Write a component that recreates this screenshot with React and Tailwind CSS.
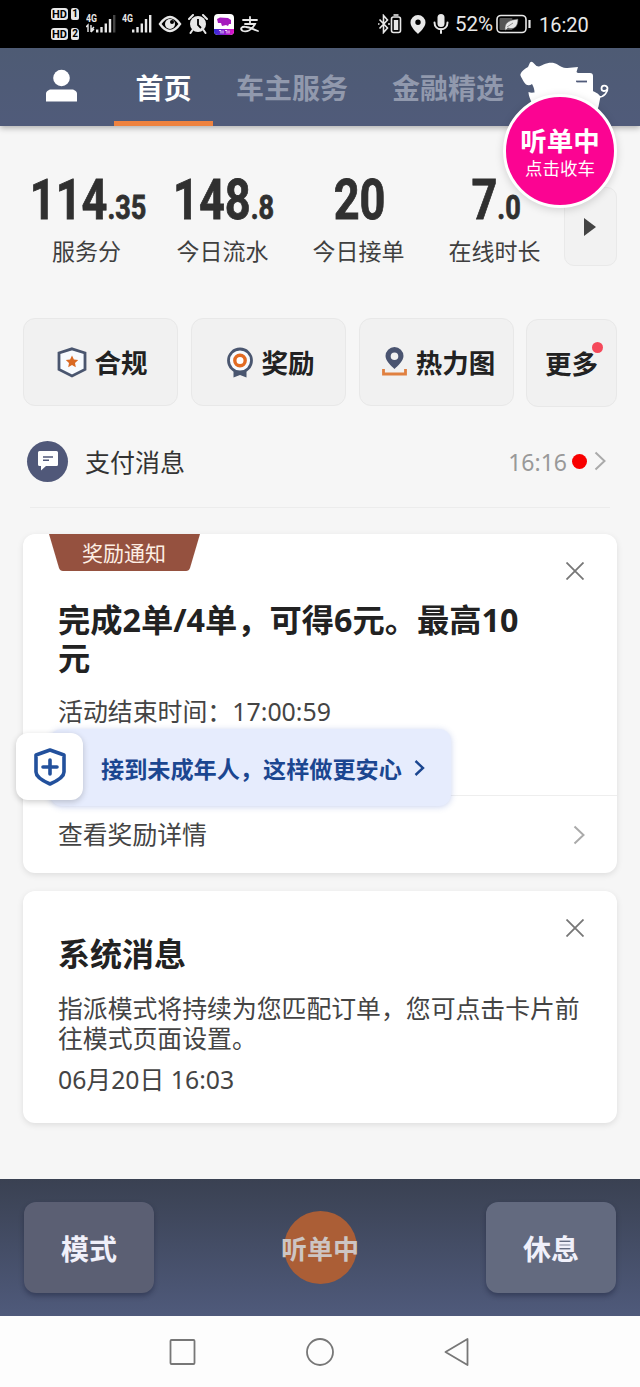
import React from 'react';

const stats = [
  { value: '114', fraction: '.35', label: '服务分' },
  { value: '148', fraction: '.8', label: '今日流水' },
  { value: '20', fraction: '', label: '今日接单' },
  { value: '7', fraction: '.0', label: '在线时长' },
];

const Signal = ({ weak }) => (
  <svg width="30" height="24" viewBox="0 0 30 24" fill="#e8e8e8">
    <text x="0" y="9.500" fontSize="11" fontWeight="700" fontFamily="Roboto" textLength="11" lengthAdjust="spacingAndGlyphs">4G</text>
    {weak && <path d="M0 15l2-2v7M5 13v7M5 18l3-3M5 20l3-3" fill="none" stroke="#e8e8e8" strokeWidth="1.4" />}
    <rect x="10" y="17.500" width="2.4" height="3" />
    <rect x="14.3" y="15" width="2.4" height="5.500" />
    <rect x="18.6" y="11.500" width="2.4" height="9" />
    <rect x="22.8" y="7" width="2.4" height="13.500" />
    <rect x="27" y="3" width="2.4" height="17.500" fill={weak ? '#444' : '#e8e8e8'} />
  </svg>
);

const SimRow = ({ n }) => (
  <div className="flex items-center gap-[3px]">
    <span className="flex h-[12px] w-[17px] items-center justify-center rounded-[3px] bg-[#e8e8e8] text-[11px] leading-none font-bold text-black">HD</span>
    <span className="flex h-[12px] w-[8px] items-center justify-center rounded-[2px] rounded-tr-[4px] bg-[#e8e8e8] text-[10px] leading-none font-bold text-black">{n}</span>
  </div>
);

const StatusBar = () => (
  <div className="flex h-[48px] items-center bg-black pl-[51px] font-[Roboto] text-[#e8e8e8]">
    <div className="flex w-[35px] flex-col gap-[8px]">
      <SimRow n="1" />
      <SimRow n="2" />
    </div>
    <div className="flex w-[36px]"><Signal weak /></div>
    <div className="flex w-[36px]"><Signal /></div>
    <svg className="mr-[6px]" width="24" height="18" viewBox="0 0 24 18">
      <path d="M2 9Q12-5 22 9Q12 23 2 9Z" fill="none" stroke="#e8e8e8" strokeWidth="2.4" />
      <circle cx="12" cy="9" r="5" fill="#e8e8e8" />
      <circle cx="14" cy="7" r="2" fill="#000" />
    </svg>
    <svg className="mr-[6px]" width="20" height="20" viewBox="0 0 20 20">
      <circle cx="10" cy="10" r="8" fill="#e8e8e8" />
      <path d="M1 5l4-4M19 5l-4-4M4.500 16l-2 3M15.500 16l2 3" stroke="#e8e8e8" strokeWidth="2" strokeLinecap="round" />
      <path d="M10 5v6l3 3" fill="none" stroke="#000" strokeWidth="1.8" />
    </svg>
    <svg className="mr-[6px]" width="20" height="21" viewBox="0 0 20 21">
      <defs>
        <linearGradient id="app" x2="1">
          <stop stopColor="#2d2ad8" />
          <stop offset="1" stopColor="#e313c6" />
        </linearGradient>
        <clipPath id="appClip"><rect width="20" height="21" rx="4" /></clipPath>
      </defs>
      <g clipPath="url(#appClip)">
        <rect width="20" height="21" fill="#fff" />
        <path d="M3 5l3-1.500 8 .5 3 2v4h-2l-1 2-2-1-4 1-1-3-3 0z" fill="#a51bbd" />
        <rect y="15" width="20" height="6" fill="url(#app)" />
        <path d="M5 16.500h2v3M9 16.500v3M11 16.500h2v3M15 16.500v3" stroke="#fff" strokeWidth=".8" fill="none" />
      </g>
    </svg>
    <svg width="20" height="17" viewBox="0 0 20 17" fill="none" stroke="#e8e8e8" strokeWidth="1.8" strokeLinecap="round">
      <path d="M3 4h14M10 1v6M5 8h10C12 14 7 16 3 15c-4-2-1-5 3-4 4 0 8 3 12 4" />
    </svg>

    <svg className="ml-[118px]" width="12" height="20" viewBox="0 0 12 20" fill="none" stroke="#e8e8e8" strokeWidth="1.6">
      <path d="M1.500 5.500l8 8.500-4 4.500V1.500l4 4.500-8 8.500" />
      <path d="M0 10h1.500M10 10h2" />
    </svg>
    <svg className="mr-[8px]" width="12" height="20" viewBox="0 0 12 20">
      <rect x="1.500" y="3" width="9" height="15.500" rx="2" fill="none" stroke="#e8e8e8" strokeWidth="1.6" />
      <rect x="3.800" y="6" width="4.400" height="10" fill="#e8e8e8" />
      <path d="M3.500 1h5" stroke="#e8e8e8" strokeWidth="1.6" />
    </svg>
    <svg width="16" height="19" viewBox="0 0 16 19">
      <path fillRule="evenodd" fill="#e8e8e8" d="M8 0a7.500 7.500 0 0 1 7.500 7.500C15.500 12 10 17 8 19 6 17 .5 12 .5 7.500A7.500 7.500 0 0 1 8 0zm0 4.500a2.700 2.700 0 1 0 0 5.400 2.700 2.700 0 0 0 0-5.400z" />
    </svg>
    <svg className="mr-[6px] ml-[7px]" width="16" height="20" viewBox="0 0 16 20">
      <rect x="4.500" y="0" width="7" height="13" rx="3.500" fill="#e8e8e8" />
      <path d="M1.500 8.500c0 9 13 9 13 0M8 15v4" fill="none" stroke="#e8e8e8" strokeWidth="2" strokeLinecap="round" />
    </svg>
    <span className="w-[41px] pt-px text-[20.5px]">52%</span>
    <svg width="36" height="20" viewBox="0 0 36 20">
      <rect x="1" y="1.500" width="29" height="17" rx="4" fill="none" stroke="#e8e8e8" strokeWidth="1.600" />
      <rect x="3.500" y="4" width="13" height="12" rx="1" fill="#555" />
      <path d="M9 16C8 8 14 6 22 5c0 8-4 11-10 9l-2 2zM11 13l6-4" fill="#e8e8e8" stroke="#555" strokeWidth=".6" />
      <path d="M33.500 6v8" stroke="#e8e8e8" strokeWidth="2.200" />
    </svg>
    <span className="ml-[7px] pt-px text-[20px]">16:20</span>
  </div>
);

const Header = () => (
  <div className="relative flex h-[78px] items-center bg-gradient-to-b from-[#4e5b74] to-[#505b7a] text-[28px] font-bold shadow-[0_2px_6px_rgba(0,0,0,0.3)]">
    <svg className="mb-[3px] ml-[45px]" width="33" height="33" viewBox="0 0 33 33" fill="#fff">
      <circle cx="16.500" cy="9" r="8.300" />
      <path d="M1 32.500v-8c0-2 3-4 5-4h21c2 0 5 2 5 4v8z" />
    </svg>
    <div className="ml-[36px] flex h-full w-[99px] items-center justify-center border-b-[5px] border-[#ee823f] pt-[7px] text-white">首页</div>
    <span className="ml-[23px] pt-[2px] text-[#9199ad]">车主服务</span>
    <span className="ml-[44px] pt-[2px] text-[#9199ad]">金融精选</span>
  </div>
);

// Floating pig badge that overlaps the header and the stats
const PigBadge = () => (
  <div className="absolute top-[56px] left-[500px] z-20 h-[156px] w-[120px]">
    <svg className="absolute top-0 left-0" width="120" height="60" viewBox="500 56 120 60">
      <rect x="570" y="73" width="23" height="30" rx="3" fill="#fff" />
      <path d="M576 81.500h11" stroke="#505b7a" strokeWidth="1.800" />
      <path fill="#fff" d="M520.500 74c1-3 4-5 7.500-7l2-4.500q1.500-1.500 3 0l3.500 3.500c3 1 4 0 7-1.500 5-2 10-2.500 14 0 4 2.500 6 4 10 3.500q5-.5 10.500-1l-1.500 5 2 1.500c-2 2-3.500 3-3 6 1 6 6 8 13 10 4 1 9 3 12 7l-2 10-3 8h-66l3-10c-1-3-4-8-4-12.500 2 1 5 .5 6 .5 0-3-1-6-2.500-8.500-2 1.500-4 1.500-6 .5-2-2-3-4-4-6-1-2-2-3-1.500-4.500z" />
      <path d="M599 97c5 0 9-5 8.500-9-1-3.500-6-3-6 .5 0 3 4 3.500 6 .5" fill="none" stroke="#fff" strokeWidth="1.800" />
    </svg>
    <div className="absolute top-[38px] left-[3px] flex h-[114px] w-[114px] flex-col items-center rounded-full border-[3px] border-white bg-[#fb0492] pt-[31px] text-white shadow-[0_2px_8px_rgba(0,0,0,0.15)]">
      <span className="text-[26.500px] leading-[27px] font-bold">听单中</span>
      <span className="mt-[3px] text-[17.500px] leading-[20px]">点击收车</span>
    </div>
  </div>
);

const Stats = () => (
  <div className="flex pt-[42px] pl-[19px]">
    {stats.map((s) => (
      <div key={s.label} className="flex w-[136px] flex-col items-center">
        <div className="ml-[2px] flex h-[68px] scale-x-[0.82] items-baseline font-[Roboto] text-[55px] leading-[64px] font-bold whitespace-nowrap text-[#303030] [-webkit-text-stroke:0.8px_#303030]">
          {s.value}
          {s.fraction && <span className="text-[33px]">{s.fraction}</span>}
        </div>
        <span className="mr-px text-[23px] leading-[30px] text-[#3f3f3f]">{s.label}</span>
      </div>
    ))}
    <div className="mt-[19px] ml-px flex h-[79px] w-[53px] items-center justify-center rounded-[10px] border border-[#e9e9e9] bg-[#f2f2f2]">
      <svg className="mr-[2px]" width="14" height="20" viewBox="0 0 14 20"><path d="M1 1l12 9L1 19z" fill="#444" /></svg>
    </div>
  </div>
);

const ShieldStar = () => (
  <svg width="30" height="31" viewBox="0 0 30 31">
    <path d="M15 1.800L28 6v16.500L15 29 2 22.500V6z" fill="#f7fbff" stroke="#4a566f" strokeWidth="2.800" />
    <path d="M15 8.500l1.900 3.900 4.300.5-3.200 3 .8 4.300-3.800-2.100-3.800 2.100.8-4.300-3.200-3 4.300-.5z" fill="#d96a24" />
  </svg>
);

const Medal = () => (
  <svg width="28" height="31" viewBox="0 0 28 31">
    <path d="M7.500 21v9.500L14 28l6.500 2.500V21z" fill="#4a566f" />
    <circle cx="14" cy="13.500" r="11.500" fill="#f7fbff" stroke="#4a566f" strokeWidth="2.800" />
    <circle cx="14" cy="13.500" r="5.200" fill="#fff" stroke="#e26b22" strokeWidth="3.400" />
  </svg>
);

const HeatPin = () => (
  <svg width="27" height="30" viewBox="0 0 27 30">
    <path fillRule="evenodd" fill="#4a5470" d="M13.500 0a9 9 0 0 1 9 9c0 5-6 10-9 13-3-3-9-8-9-13a9 9 0 0 1 9-9zm0 5.500a3.800 3.800 0 1 0 0 7.600 3.800 3.800 0 0 0 0-7.600z" />
    <path d="M2.500 22v5h22v-5" fill="none" stroke="#e08040" strokeWidth="2.800" />
  </svg>
);

const Shortcut = ({ icon, label }) => (
  <div className="flex h-[88px] w-[155px] items-center justify-center gap-[8px] rounded-[12px] border border-[#e8e8e8] bg-[#f1f1f1] pl-[3px]">
    {icon}
    <span className="pt-[3px]">{label}</span>
  </div>
);

const Shortcuts = () => (
  <div className="mt-[52px] ml-[23px] flex gap-[13px] text-[26.500px] font-bold text-[#222]">
    <Shortcut icon={<ShieldStar />} label="合规" />
    <Shortcut icon={<Medal />} label="奖励" />
    <Shortcut icon={<HeatPin />} label="热力图" />
    <div className="relative mt-px -mb-px -ml-px flex h-[88px] w-[91px] items-center justify-center rounded-[12px] border border-[#e8e8e8] bg-[#f1f1f1] pt-[3px]">
      更多
      <span className="absolute top-[22px] right-[13px] size-[11px] rounded-full bg-[#f5495b]" />
    </div>
  </div>
);

const Arrow = ({ className }) => (
  <svg className={className} width="12" height="20" viewBox="0 0 12 20" fill="none" stroke="#aaa" strokeWidth="2">
    <path d="M1.500 1.500l9 8.500-9 8.500" />
  </svg>
);

const Close = () => (
  <svg className="absolute top-[28px] right-[33px]" width="18" height="18" viewBox="0 0 18 18" stroke="#777" strokeWidth="1.800">
    <path d="M.5.5l17 17M17.500.5l-17 17" />
  </svg>
);

const MessageRow = () => (
  <div className="mx-[30px] mt-[9px] flex h-[93px] items-center border-b border-[#ececec]">
    <div className="-ml-[3px] flex size-[41px] items-center justify-center rounded-full bg-[#505879]">
      <svg width="20" height="20" viewBox="0 0 20 20">
        <path d="M1.500 0h17a1.500 1.500 0 0 1 1.500 1.500v12a1.500 1.500 0 0 1-1.500 1.500H8l-5 4.500V15H1.500A1.500 1.500 0 0 1 0 13.500v-12A1.500 1.500 0 0 1 1.500 0z" fill="#fff" />
        <path d="M5 6h10M5 9.300h6" stroke="#505879" strokeWidth="1.400" />
      </svg>
    </div>
    <span className="ml-[17px] flex-1 pt-[3px] text-[25px] text-[#333]">支付消息</span>
    <span className="pt-[2px] text-[23px] text-[#999]">16:16</span>
    <span className="ml-[5px] size-[15px] rounded-full bg-[#f80000]" />
    <Arrow className="mr-[4px] ml-[7px]" />
  </div>
);

const RewardCard = () => (
  <div className="relative mx-[23px] mt-[26px] h-[339px] rounded-[12px] bg-white shadow-[0_2px_6px_rgba(0,0,0,0.1)]">
    <Close />
    <div className="ml-[26px] grid h-[38px] w-[151px] place-items-center">
      <svg className="col-start-1 row-start-1" width="151" height="38" viewBox="0 0 151 38">
        <path d="M0 0h151l-10 34q-1 3-4 3H14q-3 0-4-3z" fill="#95513f" />
      </svg>
      <span className="z-10 col-start-1 row-start-1 pt-[2px] pr-px text-[21px] text-[#fdeee4]">奖励通知</span>
    </div>
    <h2 className="mt-[29px] ml-[35px] w-[480px] text-[32.250px] leading-[38px] font-bold text-[#222]">完成2单/4单，可得6元。最高10元</h2>
    <p className="mt-[18px] ml-[35px] text-[24.900px] leading-[32px] text-[#444]">活动结束时间：17:00:59</p>
    <div className="mt-[68px] flex h-[78px] items-center border-t border-[#eee] pr-[32px] pl-[35px]">
      <span className="flex-1 text-[24.800px] text-[#444]">查看奖励详情</span>
      <Arrow />
    </div>

    {/* safety tip floating over the card */}
    <div className="absolute top-[195px] left-[27px] flex h-[77px] w-[401px] items-center rounded-[12px] bg-[#e6ecfd] pt-[3px] pl-[51px] text-[23.150px] font-bold text-[#1b4690] shadow-[0_1px_6px_rgba(80,110,200,0.3)]">
      接到未成年人，这样做更安心
      <svg className="mb-[3px] ml-[12px]" width="11" height="16" viewBox="0 0 11 16" fill="none" stroke="#1b4690" strokeWidth="2.400">
        <path d="M1.500 1l7.500 7-7.500 7" />
      </svg>
    </div>
    <div className="absolute top-[199px] left-[-7px] flex size-[67px] items-center justify-center rounded-[12px] bg-white shadow-[0_2px_6px_rgba(0,0,0,0.2)]">
      <svg width="34" height="38" viewBox="0 0 34 38" fill="none" stroke="#22509c" strokeWidth="3.600" strokeLinejoin="round">
        <path d="M17 2L31 7v17c0 5-7 9-14 12C10 33 3 29 3 24V7z" />
        <path d="M17 12v14M10 19h14" strokeLinecap="round" />
      </svg>
    </div>
  </div>
);

const SystemCard = () => (
  <div className="relative mx-[23px] mt-[18px] h-[232px] rounded-[12px] bg-white pt-[42px] pl-[35px] shadow-[0_2px_6px_rgba(0,0,0,0.1)]">
    <Close />
    <h2 className="text-[32px] leading-[42px] font-bold text-[#222]">系统消息</h2>
    <p className="mt-[18px] w-[530px] text-[24.850px] leading-[30px] text-[#444]">指派模式将持续为您匹配订单，您可点击卡片前往模式页面设置。</p>
    <p className="mt-[10px] text-[24.800px] leading-[32px] text-[#444]">06月20日 16:03</p>
  </div>
);

const BottomBar = () => (
  <div className="flex h-[137px] items-center justify-between bg-gradient-to-b from-[#3a4152] to-[#4f5a7b] px-[24px] text-[28px] font-bold text-[#f0f0fa]">
    <div className="flex h-[91px] w-[130px] items-center justify-center rounded-[12px] bg-[#5b5f73] pt-[2px] shadow-[0_3px_5px_rgba(20,25,50,0.4)]">模式</div>
    <div className="flex size-[73px] items-center justify-center rounded-full bg-[#ab5e36] pt-[3px] text-[26px] whitespace-nowrap text-[#cdc5c3]">听单中</div>
    <div className="flex h-[91px] w-[130px] items-center justify-center rounded-[12px] bg-[#636a7f] pt-[2px] shadow-[0_3px_5px_rgba(20,25,50,0.4)]">休息</div>
  </div>
);

const SystemNav = () => (
  <div className="flex h-[71px] items-center justify-center gap-[110px] bg-[#fdfdfd] pr-px">
    <svg width="27" height="28" viewBox="0 0 27 28" fill="none" stroke="#777" strokeWidth="1.800"><rect x="1.500" y="2" width="24" height="24" rx="1" /></svg>
    <svg width="28" height="28" viewBox="0 0 28 28" fill="none" stroke="#777" strokeWidth="1.800"><circle cx="14" cy="14" r="13" /></svg>
    <svg width="26" height="28" viewBox="0 0 26 28" fill="none" stroke="#777" strokeWidth="1.800" strokeLinejoin="round"><path d="M23.500 1v26L1.500 14z" /></svg>
  </div>
);

export default function App() {
  return (
    <div className="relative h-[1387px] w-[640px] overflow-hidden bg-[#f6f6f6] font-['Noto_Sans','Noto_Sans_CJK_SC',sans-serif]">
      <StatusBar />
      <Header />
      <PigBadge />
      <div className="h-[1053px]">
        <Stats />
        <Shortcuts />
        <MessageRow />
        <RewardCard />
        <SystemCard />
      </div>
      <BottomBar />
      <SystemNav />
    </div>
  );
}
